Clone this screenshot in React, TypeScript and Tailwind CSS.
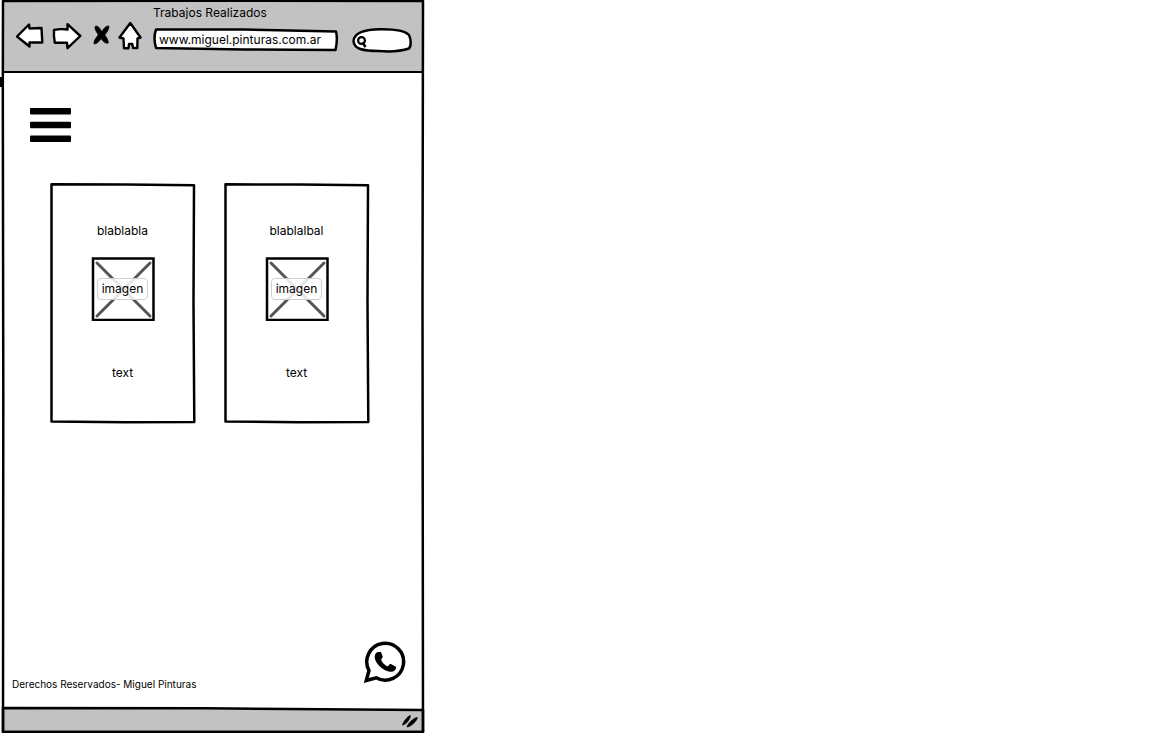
import type { ReactNode } from "react";

type OutlineProps = { viewBox: string; d: string; fill?: string };

function Outline({ viewBox, d, fill = "none" }: OutlineProps) {
  return (
    <svg
      className="pointer-events-none absolute inset-0 h-full w-full overflow-visible"
      viewBox={viewBox}
      preserveAspectRatio="none"
      aria-hidden="true"
    >
      <path d={d} fill={fill} stroke="#000" strokeWidth="2.5" strokeLinejoin="round" vectorEffect="non-scaling-stroke" />
    </svg>
  );
}

function NavButton({ label, children }: { label: string; children: ReactNode }) {
  return (
    <button type="button" aria-label={label} className="shrink-0">
      {children}
    </button>
  );
}

function Toolbar() {
  const arrow = { fill: "#fff", stroke: "#000", strokeWidth: 2.4, strokeLinejoin: "round" as const };
  return (
    <header className="flex h-[71px] items-start border-b-2 border-black bg-[#c2c2c2] pr-2.5 pl-3">
      <nav aria-label="Browser" className="flex pt-5">
        <NavButton label="Back">
          <svg className="h-7 w-7" viewBox="0 0 28 28" {...arrow}>
            <path d="M1 14.500 13 2.500 13.500 6.500 25.500 6 26.300 20.500 13.500 20.500 13.500 24.500Z" />
          </svg>
        </NavButton>
        <div className="w-2" />
        <NavButton label="Forward">
          <svg className="h-7 w-7 overflow-visible" viewBox="0 0 28 28" {...arrow}>
            <path d="M2 8Q8 6.500 15.500 7.500L15.500 2.200 28.300 14 15.500 26.200 15 20.800 2.800 20.800Q1.500 14 2 8Z" />
          </svg>
        </NavButton>
        <div className="w-3" />
        <NavButton label="Stop">
          <svg className="h-7 w-[18px]" viewBox="0 0 18 28">
            <path
              d="M3.500 4C5.800 3.500 8.500 6.500 9.800 9.800 11.500 6.500 14 3.500 17 4 17 7.500 14.800 10.500 12.800 13 14.500 15.500 16.500 18 16.300 21 13.500 22 11 19.500 9.300 16.800 7 19 5 22.500 2 21.800 1.500 18.500 4.500 15.500 6.300 12.800 4.500 10 2 6.500 3.500 4Z"
              fill="#000"
              stroke="#000"
              strokeWidth="0.7"
            />
          </svg>
        </NavButton>
        <div className="w-2" />
        <NavButton label="Home">
          <svg className="h-7 w-6" viewBox="0 0 24 28" {...arrow}>
            <path d="M12.300 1 22.500 15.500 19.500 16.500 19.300 26 15 26 14.300 22 11 22 10.500 26.300 6 26.300 5.500 16.500 1.500 15.500Z" />
          </svg>
        </NavButton>
      </nav>
      <div className="ml-[11px] min-w-0 flex-1">
        <h1 className="text-xs leading-[22px]">Trabajos Realizados</h1>
        <div className="relative mt-1 h-[22px] pl-1.5">
          <Outline
            viewBox="0 0 184 22"
            d="M3 1.500 90 1.500 182 3.500Q184 11 181.500 22L90 21.500 3 20Q0 10 3 1.500Z"
            fill="#fff"
          />
          <input
            aria-label="Address"
            defaultValue="www.miguel.pinturas.com.ar"
            className="relative block h-full w-full bg-transparent text-xs outline-none"
          />
        </div>
      </div>
      <div className="relative ml-3.5 mt-[26px] h-6 w-[60px]">
        <Outline
          viewBox="0 0 60 24"
          d="M1.500 13C2 5 11 1.500 28 1.200 43 1 53 2.500 57 7 59 11 59.500 18 57 20.500 48 23.500 37 23.800 27 23 11 23 2 21 1.500 13Z"
          fill="#fff"
        />
        <svg className="absolute top-2 left-1 h-3 w-3" viewBox="0 0 12 12" fill="none" stroke="#000" aria-hidden="true">
          <circle cx="5.500" cy="4.500" r="3.400" strokeWidth="2.200" />
          <path d="m6.500 6.500 3 4.500" strokeWidth="2.500" />
        </svg>
        <input aria-label="Search" className="relative block h-full w-full bg-transparent pr-2 pl-5 text-xs outline-none" />
      </div>
    </header>
  );
}

function WorkCard({ title }: { title: string }) {
  return (
    <article className="relative flex h-60 flex-1 flex-col items-center pt-[38px] text-xs leading-5">
      <Outline viewBox="0 0 145 240" d="M1.500 1.300 75 1.500 144 2.300 143.500 120 144.300 239 75 239.300 1.500 238.500 1.500 100Z" />
      <h2>{title}</h2>
      <div className="relative mt-4 flex h-16 w-16 items-center justify-center">
        <svg className="absolute inset-0 h-full w-full" viewBox="0 0 64 64" aria-hidden="true">
          <path d="M6 6 59 59M59 6 6 59" stroke="#555" strokeWidth="3" strokeLinecap="round" />
          <path d="M2 1.500 62.500 1.500 62.500 63 2 63Z" fill="none" stroke="#000" strokeWidth="2.500" />
        </svg>
        <span className="relative rounded border border-[#cfcfcf] bg-white/85 px-1 leading-5">imagen</span>
      </div>
      <p className="mt-[42px]">text</p>
    </article>
  );
}

export default function App() {
  return (
    <div className="min-h-screen bg-white font-['Inter',sans-serif] text-black">
      <div className="relative ml-0.5 flex min-h-screen max-w-[422px] flex-col p-0.5">
        <Toolbar />
        <main className="flex-1 px-[46px] pt-[35px]">
          <button type="button" aria-label="Menu" className="-ml-5 block">
            <svg className="h-[34px] w-[41px]" viewBox="0 0 41 34" aria-hidden="true">
              <rect width="41" height="6.600" rx="1" />
              <rect y="13.700" width="41" height="6.600" rx="1" />
              <rect y="27.400" width="41" height="6.600" rx="1" />
            </svg>
          </button>
          <section className="mt-[41px] flex gap-[29px] pr-[7px]">
            <WorkCard title="blablabla" />
            <WorkCard title="blablalbal" />
          </section>
        </main>
        <footer>
          <div className="flex items-end justify-between pr-4 pb-3.5 pl-2">
            <p className="text-[10px] leading-[18px]">Derechos Reservados- Miguel Pinturas</p>
            <a href="#whatsapp" aria-label="WhatsApp" className="mb-2.5">
              <svg className="h-[42px] w-[42px]" viewBox="0 0 42 42" aria-hidden="true">
                <path
                  d="M2.300 39.500 5 29.500A18.400 18.400 0 1 1 12.200 36.800Z"
                  fill="none"
                  stroke="#000"
                  strokeWidth="3.500"
                />
                <path
                  d="M14 11c-1.800.3-3.300 2.300-3.300 5 0 5.500 7.300 13.500 15.300 14.700 3.500.5 6-1.500 6.200-4.700l-5.700-3.200c-1.300.5-1.700 2.300-2.800 2.400-2-.2-5.700-3.500-6.500-6.200 0-1.200 1.500-2 1.600-3.200l-1.800-4.800z"
                />
              </svg>
            </a>
          </div>
          <div className="relative flex h-6 items-center justify-end pr-1">
            <Outline viewBox="0 0 418 24" d="M-1 1 200 1.300 419 3 419 25 -1 25Z" fill="#c2c2c2" />
            <svg className="relative mt-1 h-4 w-4" viewBox="0 0 16 16" aria-hidden="true">
              <path
                d="M.5 12C1 9.500 5 3.500 8.300 2.500 9 5 4 12 .5 12ZM5 14C5.500 11 11.500 4.700 15.300 4.500 15.500 7.500 8.500 14 5 14Z"
                stroke="#000"
                strokeWidth="0.7"
              />
            </svg>
          </div>
        </footer>
        <Outline
          viewBox="0 0 422 733"
          d="M1 1 200 .8 421 1 420.500 300 421 732 200 732 1 732 1.300 400 .8 88Z M-1 77 -1 87 M.5 77 .5 87"
        />
      </div>
    </div>
  );
}
